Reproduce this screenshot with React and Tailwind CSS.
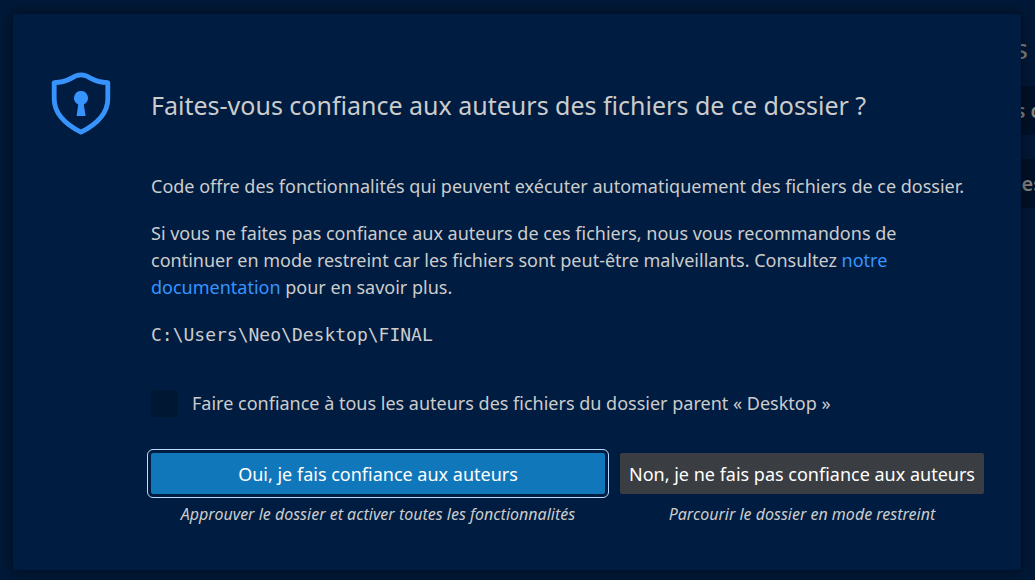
import React from "react";

function ShieldIcon() {
  return (
    <svg
      className="w-[62px] h-[64px] shrink-0"
      viewBox="0 0 62 64"
      fill="none"
      aria-hidden="true"
    >
      <path
        d="M31 3.8C27 3.8 24.5 5 21 7.4C16 10.5 11 11.4 4.2 11.6V28C4.2 42 15 53 31 61.2C47 53 57.8 42 57.8 28V11.6C51 11.4 46 10.5 41 7.4C37.5 5 35 3.8 31 3.8Z"
        stroke="#3794ff"
        strokeWidth="4.8"
        strokeLinejoin="round"
      />
      <path
        d="M31 20A7 7 0 0 1 33.8 33.4L35.6 45H26.6L28.2 33.4A7 7 0 0 1 31 20Z"
        fill="#3794ff"
      />
    </svg>
  );
}

function Backdrop() {
  return (
    <div
      className="absolute inset-0 flex flex-col items-end overflow-hidden pt-[34px] text-[#868686]"
      aria-hidden="true"
    >
      <div className="pr-[7px] text-[28px] leading-7">s</div>
      <div className="mt-6 flex h-[49px] w-12 items-center justify-end bg-[#001129] text-xl font-semibold whitespace-nowrap">
        <span className="-mr-2">s d</span>
      </div>
      <div className="mt-6 flex h-[49px] w-12 items-center justify-end bg-[#001129] text-xl font-semibold">
        <span className="-mr-2">es</span>
      </div>
    </div>
  );
}

export default function App() {
  return (
    <div className="relative flex min-h-screen bg-[#001938] pt-[14px] pr-[14px] pb-[10px] pl-[13px] font-['Noto_Sans','Open_Sans',sans-serif] text-[#cccccc]">
      <Backdrop />
      <main
        role="dialog"
        aria-labelledby="trust-title"
        className="relative min-w-0 flex-1 rounded-[4px] bg-[#001c40] px-[37px] pb-10 shadow-[0_0_12px_3px_rgba(0,0,0,0.36)]"
      >
        <header className="flex items-center pt-[57px]">
          <ShieldIcon />
          <h1 id="trust-title" className="ml-[39px] pt-1 text-[25px] leading-9">
            Faites-vous confiance aux auteurs des fichiers de ce dossier ?
          </h1>
        </header>

        <div className="pt-[38px] pl-[101px]">
          <div className="flex flex-col gap-5 text-lg leading-[27px]">
            <p>
              Code offre des fonctionnalités qui peuvent exécuter automatiquement des fichiers de ce dossier.
            </p>
            <p className="pr-6">
              Si vous ne faites pas confiance aux auteurs de ces fichiers, nous vous recommandons de
              continuer en mode restreint car les fichiers sont peut-être malveillants. Consultez{" "}
              <a href="#documentation" className="text-[#3794ff]">
                notre documentation
              </a>{" "}
              pour en savoir plus.
            </p>
            <p className="font-['DejaVu_Sans_Mono',monospace]">
              {"C:\\Users\\Neo\\Desktop\\FINAL"}
            </p>
          </div>

          <div className="mt-[42px] flex items-center gap-[14px] text-lg leading-[27px]">
            <input
              id="trust-parent"
              type="checkbox"
              className="size-[27px] appearance-none rounded-[4px] bg-[#001733]"
            />
            <label htmlFor="trust-parent">
              Faire confiance à tous les auteurs des fichiers du dossier parent « Desktop »
            </label>
          </div>

          <div className="mt-9 flex gap-[15px] text-center">
            <div className="min-w-0 flex-1">
              <button
                type="button"
                className="h-[41px] w-full rounded-[2px] bg-[#1177bb] text-lg text-white outline outline-offset-3 outline-[#bbdaff]"
              >
                Oui, je fais confiance aux auteurs
              </button>
              <p className="mt-2 text-base leading-6 italic">
                Approuver le dossier et activer toutes les fonctionnalités
              </p>
            </div>
            <div className="w-[364px]">
              <button
                type="button"
                className="h-[41px] w-full rounded-[2px] bg-[#3a3d41] text-lg whitespace-nowrap text-white"
              >
                Non, je ne fais pas confiance aux auteurs
              </button>
              <p className="mt-2 text-base leading-6 italic">
                Parcourir le dossier en mode restreint
              </p>
            </div>
          </div>
        </div>
      </main>
    </div>
  );
}
